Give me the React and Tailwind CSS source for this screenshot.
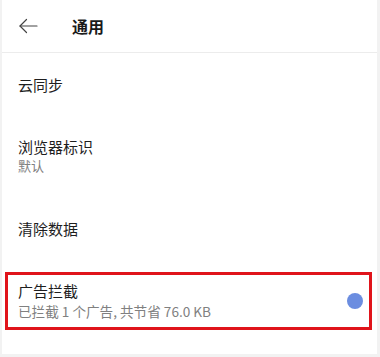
import React from "react";

export default function App() {
  const font = { fontFamily: '"Noto Sans CJK SC", "Noto Sans", sans-serif' };
  return (
    <div className="w-[380px] h-[357px] bg-[#f2f2f2] pl-[2px] pr-[3px] pb-[3px] overflow-hidden" style={font}>
      <div className="bg-white h-full flex flex-col">
        <div className="h-[53px] flex items-center border-b border-[#ececec] shrink-0">
          <svg className="ml-[16px]" width="20" height="16" viewBox="0 0 20 16" fill="none" stroke="#444" strokeWidth="1.2" strokeLinecap="round" strokeLinejoin="round">
            <path d="M19 8H2" />
            <path d="M8.5 1.5L2 8l6.5 6.5" />
          </svg>
          <span className="ml-[34px] text-[16px] font-bold text-[#1a1a1a] leading-none">通用</span>
        </div>
        <div className="h-[63px] flex items-center pl-[16px] shrink-0">
          <span className="text-[15px] text-[#1e1e1e] leading-none">云同步</span>
        </div>
        <div className="h-[80px] flex flex-col justify-center pl-[16px] shrink-0">
          <span className="text-[15px] text-[#1e1e1e] leading-[19px]">浏览器标识</span>
          <span className="text-[13px] text-[#808080] leading-[19px]">默认</span>
        </div>
        <div className="h-[64px] flex items-center pl-[16px] shrink-0">
          <span className="text-[15px] text-[#1e1e1e] leading-none">清除数据</span>
        </div>
        <div className="mt-[12px] ml-[3px] mr-[5px] h-[58px] border-[3px] border-[#e0141b] flex items-center justify-between pl-[10px] pr-[6px] shrink-0">
          <div className="flex flex-col">
            <span className="text-[15px] text-[#1e1e1e] leading-[20px]">广告拦截</span>
            <span className="text-[13.6px] text-[#808080] leading-[20px]">已拦截 1 个广告, 共节省 76.0 KB</span>
          </div>
          <div className="w-[16px] h-[16px] rounded-full bg-[#6b8de0]" />
        </div>
      </div>
    </div>
  );
}
